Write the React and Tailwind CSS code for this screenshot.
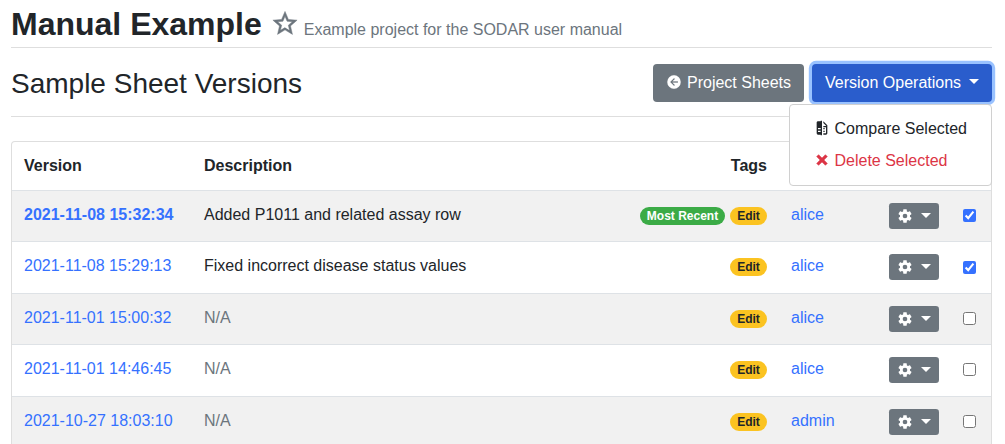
const ICONS = {
  star: 'M12,15.39L8.24,17.66L9.23,13.38L5.91,10.5L10.29,10.13L12,6.09L13.71,10.13L18.09,10.5L14.77,13.38L15.76,17.66M22,9.24L14.81,8.63L12,2L9.19,8.63L2,9.24L7.45,13.97L5.82,21L12,17.27L18.18,21L16.54,13.97L22,9.24Z',
  back: 'M2,12A10,10 0 0,1 12,2A10,10 0 0,1 22,12A10,10 0 0,1 12,22A10,10 0 0,1 2,12M18,11H10L13.5,7.5L12.08,6.08L6.16,12L12.08,17.92L13.5,16.5L10,13H18V11Z',
  compare: 'M10,18H6V16H10V18M10,14H6V12H10V14M10,1V2H6C4.89,2 4,2.89 4,4V20A2,2 0 0,0 6,22H10V23H12V1H10M20,8V20C20,21.11 19.11,22 18,22H14V20H18V11H14V9H18.5L14,4.5V2L20,8M16,14H14V12H16V14M16,18H14V16H16V18Z',
  close: 'M20 6.91L17.09 4L12 9.09L6.91 4L4 6.91L9.09 12L4 17.09L6.91 20L12 14.91L17.09 20L20 17.09L14.91 12L20 6.91Z',
  cog: 'M12,15.5A3.5,3.5 0 0,1 8.5,12A3.5,3.5 0 0,1 12,8.5A3.5,3.5 0 0,1 15.5,12A3.5,3.5 0 0,1 12,15.5M19.43,12.97C19.47,12.65 19.5,12.33 19.5,12C19.5,11.67 19.47,11.34 19.43,11L21.54,9.37C21.73,9.22 21.78,8.95 21.66,8.73L19.66,5.27C19.54,5.05 19.27,4.96 19.05,5.05L16.56,6.05C16.04,5.66 15.5,5.32 14.87,5.07L14.5,2.42C14.46,2.18 14.25,2 14,2H10C9.75,2 9.54,2.18 9.5,2.42L9.13,5.07C8.5,5.32 7.96,5.66 7.44,6.05L4.95,5.05C4.73,4.96 4.46,5.05 4.34,5.27L2.34,8.73C2.21,8.95 2.27,9.22 2.46,9.37L4.57,11C4.53,11.34 4.5,11.67 4.5,12C4.5,12.33 4.53,12.65 4.57,12.97L2.46,14.63C2.27,14.78 2.21,15.05 2.34,15.27L4.34,18.73C4.46,18.95 4.73,19.03 4.95,18.95L7.44,17.94C7.96,18.34 8.5,18.68 9.13,18.93L9.5,21.58C9.54,21.82 9.75,22 10,22H14C14.25,22 14.46,21.82 14.5,21.58L14.87,18.93C15.5,18.67 16.04,18.34 16.56,17.94L19.05,18.95C19.27,19.03 19.54,18.95 19.66,18.73L21.66,15.27C21.78,15.05 21.73,14.78 21.54,14.63L19.43,12.97Z',
};

const ROWS = [
  { version: '2021-11-08 15:32:34', description: 'Added P1011 and related assay row', user: 'alice', recent: true, checked: true, height: 'h-[51px]' },
  { version: '2021-11-08 15:29:13', description: 'Fixed incorrect disease status values', user: 'alice', checked: true, height: 'h-[52px]' },
  { version: '2021-11-01 15:00:32', user: 'alice', height: 'h-[51px]' },
  { version: '2021-11-01 14:46:45', user: 'alice', height: 'h-[52px]' },
  { version: '2021-10-27 18:03:10', user: 'admin', height: 'h-[51px]' },
];

const COLUMNS = 'grid grid-cols-[180px_1fr_auto_122px_74px_28px] items-start pl-3';

function Icon({ name, className }) {
  return (
    <svg viewBox="0 0 24 24" fill="currentColor" className={`shrink-0 ${className}`} aria-hidden="true">
      <path d={ICONS[name]} />
    </svg>
  );
}

function Caret({ className }) {
  return <span className={`h-0 w-0 border-x-transparent border-t-white ${className}`} />;
}

function Badge({ className, children }) {
  return (
    <span className={`flex h-[18px] items-center rounded-full text-[12px] leading-none font-bold ${className}`}>
      {children}
    </span>
  );
}

function VersionRow({ row, striped }) {
  return (
    <div className={`${COLUMNS} border-t border-[#dee2e6] pt-3 ${row.height} ${striped ? 'bg-[#f1f1f1]' : 'bg-white'}`}>
      <a href="#" className={`text-[#3571ff] ${row.recent ? 'font-bold' : ''}`}>{row.version}</a>
      <span className={row.description ? '' : 'text-[#6c757d]'}>{row.description || 'N/A'}</span>
      <div className="flex gap-[5px] pt-1">
        {row.recent && <Badge className="w-[85px] justify-center bg-[#3bab46] text-white">Most Recent</Badge>}
        <Badge className="w-[37px] justify-center bg-[#fbc321] text-[#212529]">Edit</Badge>
      </div>
      <a href="#" className="pl-6 text-[#3571ff]">{row.user}</a>
      <button className="flex h-[26px] w-[50px] items-center rounded-[3.2px] bg-[#6c757d] pl-2 text-white">
        <Icon name="cog" className="h-4 w-4" />
        <Caret className="-mt-0.5 ml-2 border-x-[5px] border-t-[5px]" />
      </button>
      <input type="checkbox" defaultChecked={row.checked} className={`h-[13px] w-[13px] accent-[#3571ff] ${row.height === 'h-[52px]' && row.checked ? 'mt-[7px]' : 'mt-1.5'}`} />
    </div>
  );
}

export default function App() {
  return (
    <div className="h-[444px] w-[1005px] overflow-hidden bg-white pr-[13px] pl-[11px] font-['Liberation_Sans',Arial,sans-serif] text-base leading-6 text-[#212529]">
      <header className="flex h-12 items-baseline border-b border-[#dedede] pt-[5px]">
        <h2 className="text-[32px] leading-[38px] font-bold">Manual Example</h2>
        <Icon name="star" className="mr-[3px] -mb-[3px] ml-[9px] h-[29px] w-[29px] -translate-x-[0.5px] translate-y-[3px] stroke-current stroke-[0.4] text-[#6c757d]" />
        <span className="ml-px text-[#6c757d]">Example project for the SODAR user manual</span>
      </header>

      <div className="flex h-[69px] items-start justify-between border-b border-[#dedede]">
        <h3 className="pt-[19px] text-[28px] leading-[34px]">Sample Sheet Versions</h3>
        <div className="flex gap-2 pt-4">
          <button className="flex h-[38px] w-[151px] items-center rounded bg-[#6c757d] pl-[13px] text-white">
            <Icon name="back" className="mb-0.5 h-4 w-4 stroke-white stroke-[0.3]" />
            <span className="ml-[5px] whitespace-nowrap">Project Sheets</span>
          </button>
          <div className="relative">
            <button className="flex h-[38px] w-[180px] items-center rounded bg-[#2a5dcc] pl-[13px] text-white ring-[3.2px] ring-[#99c2ff]">
              <span className="whitespace-nowrap">Version Operations</span>
              <Caret className="-mt-1 ml-2 border-x-[5px] border-t-[5px]" />
            </button>
            <div className="absolute top-10 right-0 z-10 flex h-[82px] w-[203px] flex-col rounded border border-[#d0d0d0] bg-white bg-clip-padding pt-2">
              <a href="#" className="flex h-8 items-center pl-6">
                <Icon name="compare" className="mb-0.5 h-4 w-4" />
                <span className="ml-[4.5px]">Compare Selected</span>
              </a>
              <a href="#" className="flex h-8 items-center pl-6 text-[#dc3545]">
                <Icon name="close" className="mb-0.5 h-4 w-4 stroke-current stroke-[0.8]" />
                <span className="ml-[4.5px]">Delete Selected</span>
              </a>
            </div>
          </div>
        </div>
      </div>

      <main className="mt-6 w-[981px] rounded-t border border-b-0 border-[#dedede]">
        <div className={`${COLUMNS} h-12 pt-3 font-bold`}>
          <span>Version</span>
          <span>Description</span>
          <span>Tags</span>
        </div>
        {ROWS.map((row, i) => (
          <VersionRow key={row.version} row={row} striped={i % 2 === 0} />
        ))}
      </main>
    </div>
  );
}
